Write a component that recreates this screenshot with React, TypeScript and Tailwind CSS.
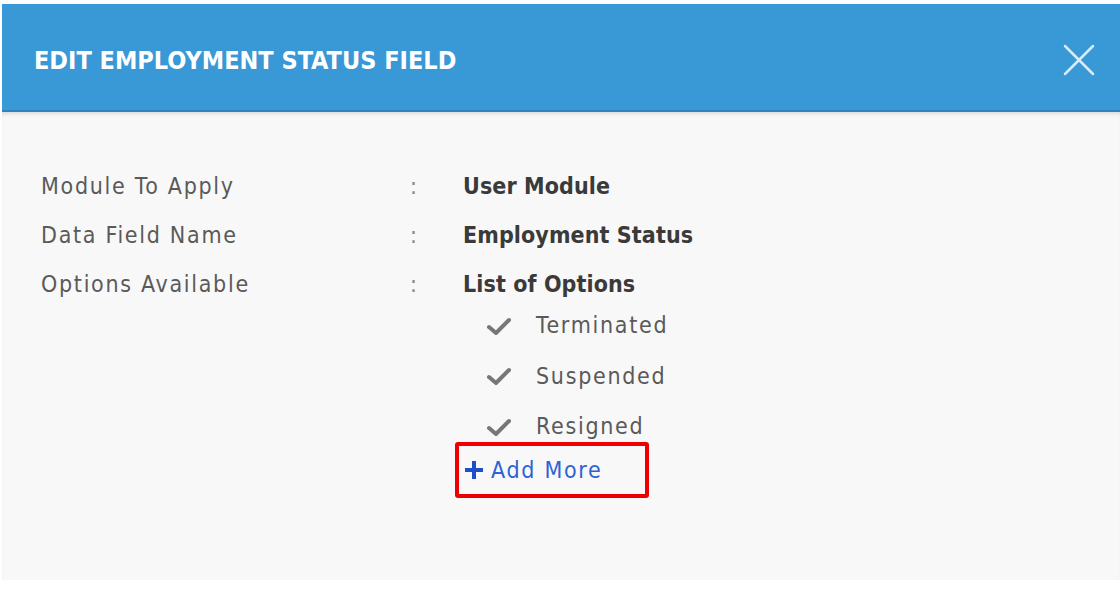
import React from "react";

const font = { fontFamily: '"DejaVu Sans Condensed", "DejaVu Sans", sans-serif' };

function Check() {
  return (
    <svg width="24" height="20" viewBox="0 0 24 20" className="shrink-0">
      <path d="M2 11 L9 17 L22 4" fill="none" stroke="#777" strokeWidth="4" strokeLinecap="round" strokeLinejoin="round" />
    </svg>
  );
}

export default function App() {
  const rows = [
    ["Module To Apply", "User Module"],
    ["Data Field Name", "Employment Status"],
    ["Options Available", "List of Options"],
  ];
  const options = ["Terminated", "Suspended", "Resigned"];
  return (
    <div className="w-[1120px] h-[595px] bg-white pt-[4px] pl-[2px] overflow-hidden" style={font}>
      <div className="w-[1118px] h-[576px] flex flex-col">
        <div className="h-[108px] bg-[#3998d6] border-b-2 border-[#2f84bd] flex items-center justify-between pl-[32px] pr-[25px] shrink-0">
          <div className="text-white text-[25px] font-bold leading-none pt-[7px]">
            EDIT EMPLOYMENT STATUS FIELD
          </div>
          <svg width="32" height="32" viewBox="0 0 32 32" className="mt-[5px]">
            <path d="M2 2 L30 30 M30 2 L2 30" stroke="#d8ecf8" strokeWidth="2.5" strokeLinecap="round" />
          </svg>
        </div>
        <div className="flex-1 bg-[#f8f8f8] pl-[39px] pt-[60px] shadow-[inset_0_4px_4px_-2px_rgba(0,0,0,0.12)]">
          <div className="flex flex-col gap-[20px]">
            {rows.map(([l, v]) => (
              <div key={l} className="flex items-center h-[29px] text-[23px] leading-none">
                <div className="w-[369px] text-[#5a5a5a] tracking-[1.7px]">{l}</div>
                <div className="w-[53px] text-[#888]">:</div>
                <div className="text-[#3a3a3a] font-bold tracking-[0.1px]">{v}</div>
              </div>
            ))}
          </div>
          <div className="ml-[446px] mt-[12px] flex flex-col gap-[21.5px]">
            {options.map((o) => (
              <div key={o} className="flex items-center h-[29px] text-[23px] leading-none text-[#5a5a5a] tracking-[1.7px]">
                <Check />
                <span className="ml-[25px]">{o}</span>
              </div>
            ))}
          </div>
          <div className="ml-[414px] mt-[1px] w-[194px] h-[56px] border-[4px] border-[#ee0000] rounded-[3px] flex items-center pl-[4px]">
            <svg width="22" height="22" viewBox="0 0 22 22">
              <path d="M11 2 V20 M2 11 H20" stroke="#1e4fc8" strokeWidth="4" />
            </svg>
            <span className="ml-[6px] text-[23px] leading-none text-[#2e63d6] tracking-[1.7px]">Add More</span>
          </div>
        </div>
      </div>
    </div>
  );
}
